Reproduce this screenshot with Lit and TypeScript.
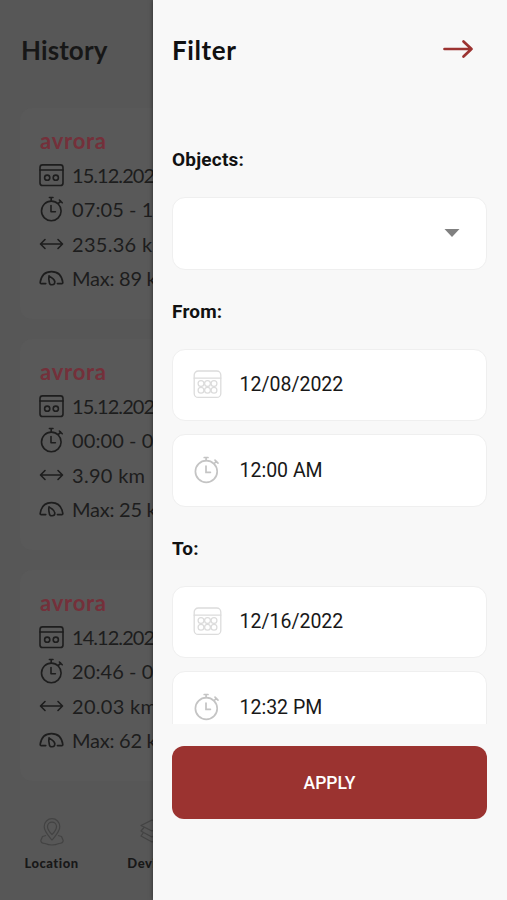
import { LitElement, html, css, svg } from "lit";
import { customElement, property } from "lit/decorators.js";

const icons: Record<string, unknown> = {
  // Two-day calendar used in the history rows
  day: svg`<rect x="1" y="2.9" width="23" height="20.6" rx="2.6"/><path d="M1 8H24"/><circle cx="8.2" cy="15.7" r="2.6"/><circle cx="16.8" cy="15.7" r="2.6"/>`,
  watch: svg`<circle cx="12.3" cy="14.9" r="9.8"/><path d="M10.4 1.5h3.6M12.2 1.5v3.4M12 9.6v6.2h4.4"/><path d="M19.4 7.4l2.4-2.2M20.4 4l2.800 2.800" />`,
  range: svg`<path d="M1.600 13H23.400M6 8.500L1.500 13L6 17.500M19 8.500L23.500 13L19 17.500"/>`,
  gauge: svg`<path d="M6.800 18.600H2.200Q1 18.600 1.200 17.400C2.200 10.500 6.500 6.600 12.500 6.600S22.800 10.500 23.800 17.400Q24 18.600 22.800 18.600H18.400"/><path d="M10 10.800C11.600 12.600 15.800 13.600 15.800 16.900A2.700 2.700 0 0 1 10.300 17.200C9.700 15 9.600 13 10 10.800Z"/>`,
};

@customElement("trip-card")
export class TripCard extends LitElement {
  @property({ attribute: false }) rows: string[] = [];
  static styles = css`
    :host { display: block; box-sizing: border-box; height: 211px; margin-bottom: 20px; padding: 18px 19px 0; background: #595959; border-radius: 12px; }
    .name { height: 32px; line-height: 30px; padding-left: 1px; font-size: 22px; font-weight: 700; color: #74303a; letter-spacing: 0.75px; }
    .row { display: flex; align-items: center; height: 34.25px; gap: 8px; color: #1d1d1d; font-size: 20px; letter-spacing: 0.1px; white-space: nowrap; }
    .day { letter-spacing: -0.95px; }
    .range { letter-spacing: 0.3px; }
    .gauge { letter-spacing: -0.25px; }
    svg { width: 25px; height: 26px; flex: none; fill: none; stroke: #1d1d1d; stroke-width: 1.6; stroke-linecap: round; stroke-linejoin: round; }
  `;
  render() {
    const kinds = ["day", "watch", "range", "gauge"];
    return html`<div class="name">avrora</div>
      ${this.rows.map((r, i) => html`<div class="row ${kinds[i]}"><svg viewBox="0 0 25 26">${icons[kinds[i]]}</svg><span>${r}</span></div>`)}`;
  }
}

@customElement("form-field")
export class FormField extends LitElement {
  @property() kind = "";
  @property() value = "";
  static styles = css`
    :host { display: flex; align-items: center; flex: none; box-sizing: border-box; height: 72.5px; padding: 0 26px 0 20px; background: #fff; border: 1px solid #efefef; border-radius: 13px; }
    .icon { width: 29px; height: 29px; flex: none; fill: none; stroke: #dcdcdc; stroke-width: 1.3; stroke-linecap: round; }
    .time { stroke: #c4c4c4; stroke-width: 1.7; }
    .value { margin-left: 17.5px; font-size: 19.5px; color: #181818; }
    .caret { margin-left: auto; width: 16px; height: 8px; fill: #808080; }
  `;
  render() {
    if (this.kind === "select") return html`<svg class="caret" viewBox="0 0 15 8"><path d="M0 0H15L7.5 8Z"/></svg>`;
    const dots = [8, 14.5, 21].map((x) => [13.6, 20.2].map((y) => svg`<circle cx=${x} cy=${y} r="2.9"/>`));
    return html`${this.kind === "date"
        ? html`<svg class="icon" viewBox="0 0 29 29"><rect x="1.2" y="1" width="26.6" height="26.400" rx="4"/><path d="M1.200 8.200H27.800"/>${dots}</svg>`
        : html`<svg class="icon time" viewBox="0 0 29 29"><circle cx="13.300" cy="15.500" r="10.900"/><path d="M11.200 1.500h3.800M13.100 1.500v3M13 10v6.300h4.400M21.200 7.500l2.200-2.100M22 4.100l3 3"/></svg>`}
      <span class="value">${this.value}</span>`;
  }
}

@customElement("app-root")
export class AppRoot extends LitElement {
  static styles = css`
    :host { display: block; position: relative; width: 507px; height: 900px; overflow: hidden; background: #575757; font-family: Lato, sans-serif; }
    .history { display: flex; flex-direction: column; height: 900px; }
    h1 { margin: 0; font-size: 26px; line-height: 32px; font-weight: 700; color: #171717; }
    .history h1 { padding: 34px 21px 42px; letter-spacing: 0.1px; }
    .list { height: 684px; padding: 0 20px; flex: none; overflow: hidden; }
    .tabs { flex: 1; display: flex; background: #575757; }
    .tab { width: 103px; display: flex; flex-direction: column; align-items: center; padding-top: 25px; font-size: 13px; line-height: 16px; font-weight: 900; letter-spacing: 0.5px; color: #181818; }
    .tab svg { width: 28px; height: 30px; margin-bottom: 8px; fill: none; stroke: #434343; stroke-width: 1.2; stroke-linejoin: round; }
    .devices { width: 98px; }
    .drawer { position: absolute; top: 0; right: 0; width: 354px; height: 900px; box-sizing: border-box; padding: 0 20px 0 19px; background: #f8f8f8; box-shadow: 0 0 4px rgba(0, 0, 0, 0.5); display: flex; flex-direction: column; font-family: Roboto, sans-serif; }
    .head { display: flex; align-items: center; justify-content: space-between; height: 100px; flex: none; padding-right: 13px; }
    .head h1 { font-family: Lato, sans-serif; letter-spacing: 0.6px; color: #111; }
    .head svg { width: 31px; height: 20px; margin-bottom: 2px; fill: none; stroke: #9c3331; stroke-width: 2.7; stroke-linecap: round; stroke-linejoin: round; }
    .form { height: 624px; flex: none; overflow: hidden; display: flex; flex-direction: column; }
    .label { flex: none; font-size: 19px; font-weight: 700; line-height: 24px; letter-spacing: 0.2px; color: #111; margin: 30px 0 25px; }
    .first { margin-top: 48px; }
    .second { margin-top: 13px; }
    .apply { flex: none; margin-top: 22px; height: 73px; border: 0; border-radius: 12px; background: #9b3330; color: #fff; font: 500 17.5px Roboto, sans-serif; }
  `;
  render() {
    const trips = [
      ["15.12.2022", "07:05 - 12:40", "235.36 km", "Max: 89 km/h"],
      ["15.12.2022", "00:00 - 07:05", "3.90 km", "Max: 25 km/h"],
      ["14.12.2022", "20:46 - 00:00", "20.03 km", "Max: 62 km/h"],
    ];
    return html`
      <main class="history">
        <h1>History</h1>
        <div class="list">${trips.map((t) => html`<trip-card .rows=${t}></trip-card>`)}</div>
        <nav class="tabs">
          <div class="tab"><svg viewBox="0 0 28 30"><path d="M14 23C10 18 6.2 14.5 6.2 9.5a7.8 7.8 0 0 1 15.6 0C21.800 14.500 18 18 14 23Z"/><path d="M14 17.500C11 14.500 9.500 12.500 9.500 9.700a4.500 4.500 0 0 1 9 0C18.500 12.500 17 14.500 14 17.500Z"/><path d="M8 18.500L4.500 19.500L2.800 23.500Q3 26.500 7 26.500Q14 29.500 21 26.500Q25 26.500 25.200 23.500L23.500 19.500L20 18.500"/></svg>Location</div>
          <div class="tab devices"><svg viewBox="0 0 28 30"><path d="M14 3L25 8.500L14 14L3 8.500ZM6 10.500L3 14L5.500 15.500L3 19L14 25L25 19L22.500 15.500L25 14L22 10.500M5.500 15.500L14 20L22.500 15.500"/></svg>Devices</div>
        </nav>
      </main>
      <aside class="drawer">
        <header class="head"><h1>Filter</h1><svg viewBox="0 0 31 20"><path d="M1.500 10H28.500M20.500 2.500L28.500 10L20.500 17.500"/></svg></header>
        <section class="form">
          <div class="label first">Objects:</div>
          <form-field kind="select"></form-field>
          <div class="label">From:</div>
          <form-field kind="date" value="12/08/2022"></form-field>
          <form-field class="second" kind="time" value="12:00 AM"></form-field>
          <div class="label">To:</div>
          <form-field kind="date" value="12/16/2022"></form-field>
          <form-field class="second" kind="time" value="12:32 PM"></form-field>
        </section>
        <button class="apply">APPLY</button>
      </aside>`;
  }
}
